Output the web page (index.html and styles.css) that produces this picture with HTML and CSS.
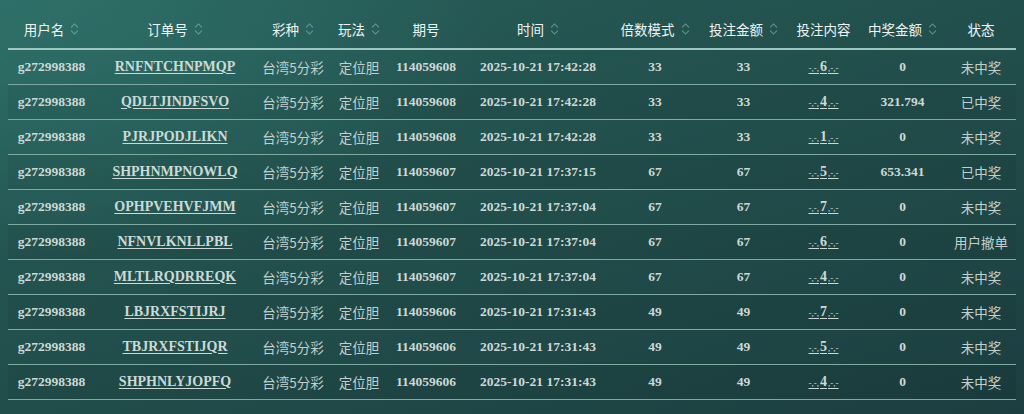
FILE: index.html
```html
<!DOCTYPE html>
<html lang="zh-CN">
<head>
<meta charset="utf-8">
<title>投注记录</title>
<link rel="stylesheet" href="styles.css">
</head>
<body>
<div class="page">
<table class="records">
  <colgroup>
    <col class="c-user"><col class="c-order"><col class="c-lottery"><col class="c-play"><col class="c-issue"><col class="c-time"><col class="c-mult"><col class="c-amount"><col class="c-content"><col class="c-win"><col class="c-status">
  </colgroup>
  <thead>
    <tr>
      <th><span class="th-in">用户名<svg class="sort" viewBox="0 0 8 14"><path d="M1 5.5L4 2.5L7 5.5M1 8.5L4 11.5L7 8.5"/></svg></span></th>
      <th><span class="th-in">订单号<svg class="sort" viewBox="0 0 8 14"><path d="M1 5.5L4 2.5L7 5.5M1 8.5L4 11.5L7 8.5"/></svg></span></th>
      <th><span class="th-in">彩种<svg class="sort" viewBox="0 0 8 14"><path d="M1 5.5L4 2.5L7 5.5M1 8.5L4 11.5L7 8.5"/></svg></span></th>
      <th><span class="th-in">玩法<svg class="sort" viewBox="0 0 8 14"><path d="M1 5.5L4 2.5L7 5.5M1 8.5L4 11.5L7 8.5"/></svg></span></th>
      <th><span class="th-in">期号</span></th>
      <th><span class="th-in">时间<svg class="sort" viewBox="0 0 8 14"><path d="M1 5.5L4 2.5L7 5.5M1 8.5L4 11.5L7 8.5"/></svg></span></th>
      <th><span class="th-in">倍数模式<svg class="sort" viewBox="0 0 8 14"><path d="M1 5.5L4 2.5L7 5.5M1 8.5L4 11.5L7 8.5"/></svg></span></th>
      <th><span class="th-in">投注金额<svg class="sort" viewBox="0 0 8 14"><path d="M1 5.5L4 2.5L7 5.5M1 8.5L4 11.5L7 8.5"/></svg></span></th>
      <th><span class="th-in">投注内容</span></th>
      <th><span class="th-in">中奖金额<svg class="sort" viewBox="0 0 8 14"><path d="M1 5.5L4 2.5L7 5.5M1 8.5L4 11.5L7 8.5"/></svg></span></th>
      <th><span class="th-in">状态</span></th>
    </tr>
  </thead>
  <tbody>
    <tr><td class="num">g272998388</td><td class="num"><a class="order">RNFNTCHNPMQP</a></td><td class="zh">台湾5分彩</td><td class="zh">定位胆</td><td class="num">114059608</td><td class="num">2025-10-21 17:42:28</td><td class="num">33</td><td class="num">33</td><td class="num"><span class="bet">-,-,<b class="digit">6</b>,-,-</span></td><td class="num">0</td><td class="zh">未中奖</td></tr>
    <tr><td class="num">g272998388</td><td class="num"><a class="order">QDLTJINDFSVO</a></td><td class="zh">台湾5分彩</td><td class="zh">定位胆</td><td class="num">114059608</td><td class="num">2025-10-21 17:42:28</td><td class="num">33</td><td class="num">33</td><td class="num"><span class="bet">-,-,<b class="digit">4</b>,-,-</span></td><td class="num">321.794</td><td class="zh">已中奖</td></tr>
    <tr><td class="num">g272998388</td><td class="num"><a class="order">PJRJPODJLIKN</a></td><td class="zh">台湾5分彩</td><td class="zh">定位胆</td><td class="num">114059608</td><td class="num">2025-10-21 17:42:28</td><td class="num">33</td><td class="num">33</td><td class="num"><span class="bet">-,-,<b class="digit">1</b>,-,-</span></td><td class="num">0</td><td class="zh">未中奖</td></tr>
    <tr><td class="num">g272998388</td><td class="num"><a class="order">SHPHNMPNOWLQ</a></td><td class="zh">台湾5分彩</td><td class="zh">定位胆</td><td class="num">114059607</td><td class="num">2025-10-21 17:37:15</td><td class="num">67</td><td class="num">67</td><td class="num"><span class="bet">-,-,<b class="digit">5</b>,-,-</span></td><td class="num">653.341</td><td class="zh">已中奖</td></tr>
    <tr><td class="num">g272998388</td><td class="num"><a class="order">OPHPVEHVFJMM</a></td><td class="zh">台湾5分彩</td><td class="zh">定位胆</td><td class="num">114059607</td><td class="num">2025-10-21 17:37:04</td><td class="num">67</td><td class="num">67</td><td class="num"><span class="bet">-,-,<b class="digit">7</b>,-,-</span></td><td class="num">0</td><td class="zh">未中奖</td></tr>
    <tr><td class="num">g272998388</td><td class="num"><a class="order">NFNVLKNLLPBL</a></td><td class="zh">台湾5分彩</td><td class="zh">定位胆</td><td class="num">114059607</td><td class="num">2025-10-21 17:37:04</td><td class="num">67</td><td class="num">67</td><td class="num"><span class="bet">-,-,<b class="digit">6</b>,-,-</span></td><td class="num">0</td><td class="zh">用户撤单</td></tr>
    <tr><td class="num">g272998388</td><td class="num"><a class="order">MLTLRQDRREQK</a></td><td class="zh">台湾5分彩</td><td class="zh">定位胆</td><td class="num">114059607</td><td class="num">2025-10-21 17:37:04</td><td class="num">67</td><td class="num">67</td><td class="num"><span class="bet">-,-,<b class="digit">4</b>,-,-</span></td><td class="num">0</td><td class="zh">未中奖</td></tr>
    <tr><td class="num">g272998388</td><td class="num"><a class="order">LBJRXFSTIJRJ</a></td><td class="zh">台湾5分彩</td><td class="zh">定位胆</td><td class="num">114059606</td><td class="num">2025-10-21 17:31:43</td><td class="num">49</td><td class="num">49</td><td class="num"><span class="bet">-,-,<b class="digit">7</b>,-,-</span></td><td class="num">0</td><td class="zh">未中奖</td></tr>
    <tr><td class="num">g272998388</td><td class="num"><a class="order">TBJRXFSTIJQR</a></td><td class="zh">台湾5分彩</td><td class="zh">定位胆</td><td class="num">114059606</td><td class="num">2025-10-21 17:31:43</td><td class="num">49</td><td class="num">49</td><td class="num"><span class="bet">-,-,<b class="digit">5</b>,-,-</span></td><td class="num">0</td><td class="zh">未中奖</td></tr>
    <tr><td class="num">g272998388</td><td class="num"><a class="order">SHPHNLYJOPFQ</a></td><td class="zh">台湾5分彩</td><td class="zh">定位胆</td><td class="num">114059606</td><td class="num">2025-10-21 17:31:43</td><td class="num">49</td><td class="num">49</td><td class="num"><span class="bet">-,-,<b class="digit">4</b>,-,-</span></td><td class="num">0</td><td class="zh">未中奖</td></tr>
  </tbody>
</table>
</div>
</body>
</html>
```

FILE: styles.css
```css
html, body {
  margin: 0;
  padding: 0;
  height: 100%;
}
body {
  background:
    radial-gradient(ellipse 70% 90% at 0% 0%, rgba(48, 118, 110, 0.75) 0%, rgba(48, 118, 110, 0) 70%),
    linear-gradient(160deg, #285f5a 0%, #22504d 45%, #1c3e40 100%);
  font-family: "Liberation Serif", "Noto Sans CJK SC", serif;
  color: #cbd8d4;
  min-height: 414px;
}
.page {
  padding: 0 8px;
}
.records {
  width: 100%;
  table-layout: fixed;
  border-collapse: collapse;
}
.c-user { width: 87px; }
.c-order { width: 160px; }
.c-lottery { width: 76px; }
.c-play { width: 56px; }
.c-issue { width: 78px; }
.c-time { width: 146px; }
.c-mult { width: 88px; }
.c-amount { width: 89px; }
.c-content { width: 71px; }
.c-win { width: 87px; }
.c-status { width: 70px; }

.records th {
  height: 49px;
  box-sizing: border-box;
  padding: 14px 0 5px;
  font-family: "Noto Sans CJK SC", "Noto Sans", sans-serif;
  font-weight: 400;
  font-size: 13.5px;
  color: #eef4f2;
  text-align: center;
  white-space: nowrap;
  border-bottom: 2px solid #9ec6c0;
}
.th-in {
  display: inline-flex;
  align-items: center;
  gap: 6px;
}
.sort {
  width: 9px;
  height: 16px;
  fill: none;
  stroke: rgba(190, 215, 210, 0.45);
  stroke-width: 1;
}
.records td {
  height: 35px;
  box-sizing: border-box;
  padding: 0;
  text-align: center;
  white-space: nowrap;
  border-bottom: 1px solid #7fa9a3;
}
.records tbody tr:nth-child(even) td {
  background: rgba(0, 0, 0, 0.05);
}
.num {
  font-family: "Liberation Serif", serif;
  font-weight: 700;
  font-size: 13.5px;
  color: #cdd9d5;
}
.zh {
  font-family: "Noto Sans CJK SC", "Noto Sans", sans-serif;
  font-size: 13.5px;
  color: #c3cfcb;
}
.order {
  font-size: 14px;
  color: #ccdad6;
  text-decoration: underline;
  text-underline-offset: 2px;
}
.bet {
  font-size: 9px;
  font-weight: 400;
  text-decoration: underline;
  text-underline-offset: 2px;
}
.digit {
  font-size: 14px;
  font-weight: 700;
  padding: 0 1px;
}
```
